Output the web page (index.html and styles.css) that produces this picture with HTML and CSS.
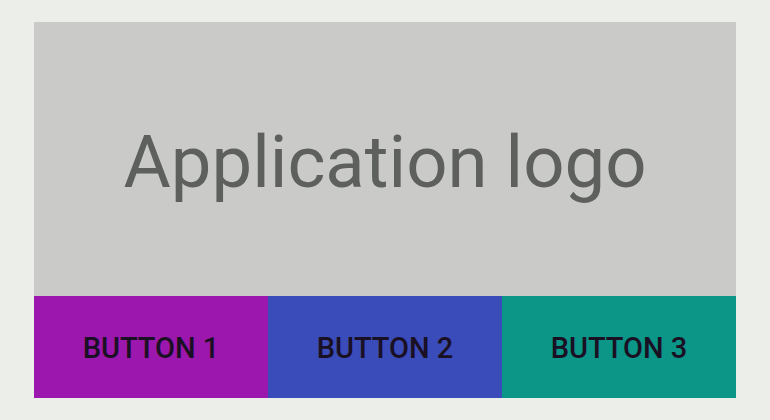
FILE: index.html
```html
<!DOCTYPE html>
<html>
<head>
<meta charset="utf-8">
<link rel="stylesheet" href="styles.css">
</head>
<body>
<div class="panel">
  <div class="logo">Application logo</div>
  <div class="buttons">
    <div class="btn btn1">BUTTON 1</div>
    <div class="btn btn2">BUTTON 2</div>
    <div class="btn btn3">BUTTON 3</div>
  </div>
</div>
</body>
</html>
```
FILE: styles.css
```css
html, body {
  margin: 0;
  padding: 0;
  background: #eceeea;
  font-family: Roboto, "Liberation Sans", sans-serif;
}
body {
  padding: 22px 34px;
}
.panel {
  width: 702px;
  height: 376px;
  display: flex;
  flex-direction: column;
}
.logo {
  box-sizing: border-box;
  height: 274px;
  padding-top: 6px;
  background: #cacbc8;
  color: #5d605c;
  font-size: 72.5px;
  display: flex;
  align-items: center;
  justify-content: center;
}
.buttons {
  height: 102px;
  display: grid;
  grid-template-columns: 234px 234px 234px;
}
.btn {
  box-sizing: border-box;
  padding-top: 2px;
  display: flex;
  align-items: center;
  justify-content: center;
  font-size: 29px;
  font-weight: 500;
  color: #1a1024;
}
.btn1 { background: #9c17ad; }
.btn2 { background: #3a4cba; }
.btn3 { background: #0b9687; }
```
